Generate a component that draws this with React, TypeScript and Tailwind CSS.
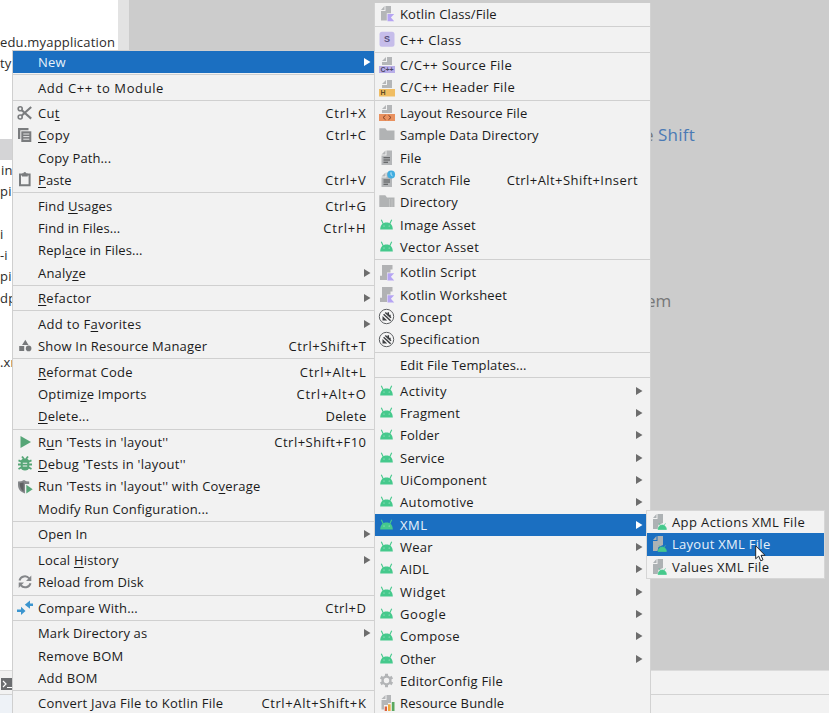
import React from "react";

type Item = { label: string; icon?: string; keys?: string; arrow?: boolean; active?: boolean; track?: string; keyTrack?: string };
type Entry = Item | "-";

const contextMenu: Entry[] = [
  { label: "New", arrow: true, active: true, track: "tracking-[0.25px]" },
  "-",
  { label: "Add C++ to Module", track: "tracking-[0.6px]" },
  "-",
  { label: "Cu&t", icon: "cut", keys: "Ctrl+X", track: "tracking-[0.3px]", keyTrack: "tracking-[0.8px]" },
  { label: "&Copy", icon: "copy", keys: "Ctrl+C", track: "tracking-[0.35px]" },
  { label: "Copy Path...", track: "tracking-[0.12px]" },
  { label: "&Paste", icon: "paste", keys: "Ctrl+V", track: "tracking-[0.1px]", keyTrack: "tracking-[0.8px]" },
  "-",
  { label: "Find &Usages", keys: "Ctrl+G", track: "tracking-[0.15px]", keyTrack: "tracking-[0.5px]" },
  { label: "Find in Files...", keys: "Ctrl+H", track: "tracking-[0.08px]", keyTrack: "tracking-[0.8px]" },
  { label: "Repl&ace in Files...", track: "tracking-[0.12px]" },
  { label: "Analy&ze", arrow: true, track: "tracking-[0.2px]" },
  "-",
  { label: "&Refactor", arrow: true, track: "tracking-[0.3px]" },
  "-",
  { label: "Add to F&avorites", arrow: true, track: "tracking-[0.32px]" },
  { label: "Show In Resource Manager", icon: "resource", keys: "Ctrl+Shift+T", track: "tracking-[0.19px]" },
  "-",
  { label: "&Reformat Code", keys: "Ctrl+Alt+L", track: "tracking-[0.27px]", keyTrack: "tracking-[0.75px]" },
  { label: "Optimi&ze Imports", keys: "Ctrl+Alt+O", track: "tracking-[0.18px]", keyTrack: "tracking-[0.75px]" },
  { label: "&Delete...", keys: "Delete", track: "tracking-[0.2px]", keyTrack: "tracking-[0.3px]" },
  "-",
  { label: "R&un 'Tests in 'layout''", icon: "run", keys: "Ctrl+Shift+F10", track: "tracking-[0.2px]", keyTrack: "tracking-[0.5px]" },
  { label: "&Debug 'Tests in 'layout''", icon: "debug", track: "tracking-[0.26px]" },
  { label: "Run 'Tests in 'layout'' with Co&verage", icon: "coverage", track: "tracking-[0.2px]" },
  { label: "Modify Run Configuration...", track: "tracking-[0.19px]" },
  "-",
  { label: "Open In", arrow: true, track: "tracking-[0.15px]" },
  "-",
  { label: "Local &History", arrow: true, track: "tracking-[0.2px]" },
  { label: "Reload from Disk", icon: "reload", track: "tracking-[0.13px]" },
  "-",
  { label: "Compare With...", icon: "compare", keys: "Ctrl+D", track: "tracking-[0.17px]", keyTrack: "tracking-[0.5px]" },
  "-",
  { label: "Mark Directory as", arrow: true, track: "tracking-[0.13px]" },
  { label: "Remove BOM", track: "tracking-[0.3px]" },
  { label: "Add BOM", track: "tracking-[0.3px]" },
  "-",
  { label: "Convert Java File to Kotlin File", keys: "Ctrl+Alt+Shift+K", track: "tracking-[0.24px]", keyTrack: "tracking-[0.62px]" },
];

const newMenu: Entry[] = [
  { label: "Kotlin Class/File", icon: "kotlinFile", track: "tracking-[0.12px]" },
  "-",
  { label: "C++ Class", icon: "cppClass", track: "tracking-[0.45px]" },
  "-",
  { label: "C/C++ Source File", icon: "cppSource", track: "tracking-[0.42px]" },
  { label: "C/C++ Header File", icon: "cppHeader", track: "tracking-[0.42px]" },
  "-",
  { label: "Layout Resource File", icon: "layoutFile", track: "tracking-[0.15px]" },
  { label: "Sample Data Directory", icon: "folder", track: "tracking-[0.13px]" },
  { label: "File", icon: "file", track: "tracking-[0.25px]" },
  { label: "Scratch File", icon: "scratch", keys: "Ctrl+Alt+Shift+Insert", track: "tracking-[0.14px]", keyTrack: "tracking-[0.43px]" },
  { label: "Directory", icon: "directory", track: "tracking-[0.25px]" },
  { label: "Image Asset", icon: "android", track: "tracking-[0.25px]" },
  { label: "Vector Asset", icon: "android", track: "tracking-[0.35px]" },
  "-",
  { label: "Kotlin Script", icon: "kotlinScript", track: "tracking-[0.27px]" },
  { label: "Kotlin Worksheet", icon: "kotlinScript", track: "tracking-[0.22px]" },
  { label: "Concept", icon: "gauge", track: "tracking-[0.35px]" },
  { label: "Specification", icon: "gauge", track: "tracking-[0.25px]" },
  "-",
  { label: "Edit File Templates...", track: "tracking-[0.13px]" },
  "-",
  { label: "Activity", icon: "android", arrow: true, track: "tracking-[0.45px]" },
  { label: "Fragment", icon: "android", arrow: true, track: "tracking-[0.22px]" },
  { label: "Folder", icon: "android", arrow: true, track: "tracking-[0.2px]" },
  { label: "Service", icon: "android", arrow: true, track: "tracking-[0.25px]" },
  { label: "UiComponent", icon: "android", arrow: true, track: "tracking-[0.22px]" },
  { label: "Automotive", icon: "android", arrow: true, track: "tracking-[0.38px]" },
  { label: "XML", icon: "android", arrow: true, active: true, track: "tracking-[0.5px]" },
  { label: "Wear", icon: "android", arrow: true, track: "tracking-[0.2px]" },
  { label: "AIDL", icon: "android", arrow: true, track: "tracking-[0.25px]" },
  { label: "Widget", icon: "android", arrow: true, track: "tracking-[0.65px]" },
  { label: "Google", icon: "android", arrow: true, track: "tracking-[0.6px]" },
  { label: "Compose", icon: "android", arrow: true, track: "tracking-[0.38px]" },
  { label: "Other", icon: "android", arrow: true, track: "tracking-[0.15px]" },
  { label: "EditorConfig File", icon: "gear", track: "tracking-[0.24px]" },
  { label: "Resource Bundle", icon: "bundle", track: "tracking-[0.12px]" },
];

const xmlMenu: Entry[] = [
  { label: "App Actions XML File", icon: "xmlFile", track: "tracking-[0.4px]" },
  { label: "Layout XML File", icon: "xmlFile", active: true, track: "tracking-[0.28px]" },
  { label: "Values XML File", icon: "xmlFile", track: "tracking-[0.28px]" },
];

const Page = () => (
  <>
    <path d="M6.500 .500 2.500 4.500h4z" fill="#b4b6b8" />
    <path d="M7.500 .500v5h-5v9.500h10.500V.500z" fill="#b4b6b8" />
  </>
);

const HalfPage = () => (
  <>
    <path d="M7 0 3 4h4z" fill="#b4b6b8" />
    <path d="M8 0v5H3v3h10V0z" fill="#b4b6b8" />
  </>
);

const badgeText = "font-['Liberation_Sans'] font-bold";

const icons: Record<string, React.ReactNode> = {
  cut: (
    <g fill="none" stroke="#7a7c7e" strokeWidth="1.600">
      <circle cx="3.200" cy="3.800" r="2" />
      <circle cx="3.200" cy="12" r="2" />
      <path d="M4.800 5.200 14.200 13.600M4.800 10.600 14.200 2" strokeWidth="2.100" />
    </g>
  ),
  copy: (
    <>
      <path d="M1 0h10.500v2.300H3.300v8.700H1z" fill="#7a7c7e" />
      <path d="M4.300 3.300h10V14h-10z" fill="#7a7c7e" />
      <path d="M6.300 6h6M6.300 8.600h6M6.300 11.200h6" stroke="#f2f2f2" strokeWidth=".9" />
    </>
  ),
  paste: (
    <>
      <path d="M3 2.500h9.600v10.800H3z" fill="none" stroke="#7a7c7e" strokeWidth="2" />
      <path d="M5 1.500h1.300a1.500 1.500 0 0 1 3 0h1.400v3H5z" fill="#7a7c7e" />
    </>
  ),
  resource: (
    <g fill="#76787a">
      <path d="M8.300 1.800 11.500 7H5.100z" />
      <path d="M2.200 8h5v5h-5z" />
      <circle cx="11.600" cy="10.400" r="2.800" />
    </g>
  ),
  run: <path d="M3.500 2v12L14 8z" fill="#56a677" />,
  debug: (
    <g>
      <path d="M3.800 5.500C3.800 3.500 5.700 2.500 8 2.500s4.200 1 4.200 3v5.700c0 2-1.800 3.300-4.200 3.300s-4.200-1.300-4.200-3.300z" fill="#56a677" />
      <path d="M5 .500l2 2.500M11 .500 9 3M1.500 4.400 5 5.800M14.500 4.400 11 5.800M1 8.500h14M1.500 13 5 11M14.500 13 11 11" stroke="#56a677" strokeWidth="1.900" />
      <path d="M5.800 7.200h4.400M5.800 10h4.400" stroke="#f2f2f2" strokeWidth="1.100" />
    </g>
  ),
  coverage: (
    <>
      <path d="M1 2.600Q4.500 2.600 7 1q2 1.600 5.200 1.600V5H8v9.500C3.400 13 1 10 1 6z" fill="#85878a" />
      <path d="M6.600 3.500v9Q3 10.500 2.600 4.300z" fill="#5f6163" />
      <path d="M9.300 5.800v8.800l6.400-4.400z" fill="#56a677" />
    </>
  ),
  reload: (
    <g fill="none" stroke="#85878a" strokeWidth="2">
      <path d="M2.500 6.500A5.600 5.600 0 0 1 12.300 4.500M13.500 9.200A5.600 5.600 0 0 1 3.700 11.200" />
      <path d="M14.300 1.500v5.500H9zM1.700 14V8.600H7z" fill="#85878a" stroke="none" />
    </g>
  ),
  compare: (
    <g fill="#3b95cf">
      <path d="M0 9.500h4V6.800L8.500 11 4 15v-3H0z" />
      <path d="M16 3.500h-3V.500L7.800 4.700l5.200 4V6H16z" />
    </g>
  ),
  kotlinFile: (
    <>
      <path d="M5.500 0 2 4h3.500z" fill="#b4b6b8" />
      <path d="M6.500 0v5H2v9.500h5.800V7.300H12V0z" fill="#b4b6b8" />
      <path d="M8.500 8h6.700l-3.300 3.500 3.300 3.700H8.500z" fill="#b5a4f3" />
    </>
  ),
  kotlinScript: (
    <>
      <path d="M3 0h10.500v4.500h-2V7.500H8V15H1v-4.300h2z" fill="#b1b2b4" />
      <path d="M8.500 8.200h6.700l-3.300 3.500 3.300 3.700H8.500z" fill="#b5a4f3" />
    </>
  ),
  cppClass: (
    <>
      <rect x=".500" y="-.300" width="15" height="15" rx="2.500" fill="#c6bdea" />
      <text x="8" y="10.300" textAnchor="middle" fontSize="9" fill="#55507a" className={badgeText}>S</text>
    </>
  ),
  cppSource: (
    <>
      <HalfPage />
      <path d="M0 9h16v7H0z" fill="#b9aee8" />
      <text x="8" y="15" textAnchor="middle" fontSize="7" textLength="13" fill="#4d4966" className={badgeText}>C++</text>
    </>
  ),
  cppHeader: (
    <>
      <HalfPage />
      <path d="M0 9h16v7.500H0z" fill="#f0bd62" />
      <text x="4" y="15.300" textAnchor="middle" fontSize="7" fill="#5d4c26" className={badgeText}>H</text>
    </>
  ),
  layoutFile: (
    <>
      <HalfPage />
      <path d="M0 9h16v7H0z" fill="#e9915f" />
      <path d="M6.500 10.300 4 12.500l2.500 2.200M9.500 10.300l2.500 2.200-2.500 2.200" fill="none" stroke="#7e4228" />
    </>
  ),
  folder: <path d="M.300 1.300h6L8 3.500h7.500V13H.300z" fill="#b1b3b4" />,
  directory: (
    <>
      <path d="M.300 1.300h6L8 3.500h7.500V13H.300z" fill="#b1b3b4" />
      <path d="M10.500 5v8M13 5v8" stroke="#c5c6c7" strokeWidth=".8" />
    </>
  ),
  file: (
    <>
      <Page />
      <path d="M4.500 7.800h6.500M4.500 10h6.500M4.500 12.200h4.500" stroke="#4e5052" strokeWidth="1.100" />
    </>
  ),
  scratch: (
    <>
      <Page />
      <path d="M4.500 8h6.500M4.500 10h6.500M4.500 12.200h4.500" stroke="#4e5052" strokeWidth="1.100" />
      <circle cx="12.200" cy="2.500" r="3.900" fill="#41ade0" />
      <path d="M12 .3V2.700l1.500 1.200" fill="none" stroke="#d5effa" strokeWidth=".9" />
    </>
  ),
  android: (
    <>
      <path d="M1.200 12.500C1.300 7.800 3.700 5.400 7.500 5.400s6.200 2.400 6.300 7.100z" fill="#45c98c" />
      <path d="M2.300 2.800 4.300 7M12.700 2.800 10.700 7" stroke="#45c98c" strokeWidth="1.100" />
      <circle cx="5" cy="9" r=".550" fill="#c4eeda" />
      <circle cx="10.200" cy="9" r=".550" fill="#c4eeda" />
    </>
  ),
  gauge: (
    <>
      <circle cx="7.500" cy="7.500" r="7.200" fill="#f6f6f6" stroke="#5c5e61" strokeWidth="1" />
      <path d="M3.500 11.500V7l4.700 4.500z" fill="#3d3f42" />
      <path d="M4.600 5.300l7 6.400M6.300 3.500l5.700 5.200M9.300 3.300v3.200h2.400" fill="none" stroke="#3d3f42" strokeWidth="1.500" />
    </>
  ),
  gear: (
    <g fill="none" stroke="#b3b5b7">
      <circle cx="7.500" cy="7.500" r="3.900" strokeWidth="2.400" />
      <path d="M7.500 .700v3M7.500 11.300v3M1.700 4.100l2.600 1.600M10.700 9.300l2.600 1.600M1.700 10.900l2.600-1.600M10.700 5.700l2.600-1.600" strokeWidth="3" />
    </g>
  ),
  bundle: (
    <>
      <path d="M6.500 0 2.500 4h4zM7.500 0v5h-5v9.500H5V10h4V8h3V0z" fill="#b4b6b8" />
      <path d="M5.700 11.500H8V16H5.700z" fill="#d9603f" />
      <path d="M9 9.300h2.600V16H9z" fill="#f0a73e" />
      <path d="M12.800 7h2.700v9h-2.700z" fill="#5aa85f" />
    </>
  ),
  xmlFile: (
    <>
      <path d="M5.500 0 2 4h3.500zM6.500 0v5H2v10h4.500l1-4 4.500-2V0z" fill="#adb2b4" />
      <path d="M7 15.500a4.200 4.500 0 0 1 8.400 0zM8 9.300l1.500 2.300M14.500 9.300 13 11.600" fill="#45c98c" stroke="#45c98c" strokeWidth=".7" />
    </>
  ),
};

function Label({ text }: { text: string }) {
  const at = text.indexOf("&");
  if (at < 0) return <>{text}</>;
  return (
    <>
      {text.slice(0, at)}
      <span className="underline decoration-1 underline-offset-2">{text[at + 1]}</span>
      {text.slice(at + 2)}
    </>
  );
}

function Menu({ entries, className, keysEnd, arrowEnd }: { entries: Entry[]; className: string; keysEnd: string; arrowEnd: string }) {
  return (
    <div className={`absolute flex flex-col bg-[#f2f2f2] text-[#1b1b1b] ${className}`}>
      {entries.map((entry, i) =>
        entry === "-" ? (
          <div key={i} className="h-[3.22px] shrink-0 pt-px">
            <div className="h-px bg-[#d0d0d0]" />
          </div>
        ) : (
          <div key={i} className={`flex h-[22.33px] shrink-0 items-center pl-1 ${entry.active ? "bg-[#1b6fc1] text-[#e8f1fa]" : ""}`}>
            <svg viewBox="0 0 16 16" className="mr-[5px] size-4 shrink-0 overflow-visible">
              {entry.icon && icons[entry.icon]}
            </svg>
            <span className={`flex-1 pt-[1.2px] whitespace-pre ${entry.track ?? ""}`}>
              <Label text={entry.label} />
            </span>
            {entry.keys && <span className={`pt-[1.2px] whitespace-pre ${keysEnd} ${entry.keyTrack ?? "tracking-[0.6px]"}`}>{entry.keys}</span>}
            {entry.arrow && (
              <svg viewBox="0 0 7 8" className={`h-2 w-[7px] ${arrowEnd}`}>
                <path d="M0 0v8l6.500-4z" fill={entry.active ? "#ffffff" : "#6d6d6d"} />
              </svg>
            )}
          </div>
        ),
      )}
    </div>
  );
}

const treeRows = ["", "edu.myapplication", "ty", "", "", "", "", "in", "pi", "", "i", "-i", "pi", "dp", "", "", ".xr"];

export default function App() {
  return (
    <div className="relative flex h-[713px] w-[829px] flex-col overflow-hidden bg-white font-['Open_Sans','Noto_Sans',sans-serif] text-[13px]">
      <div className="flex h-[670px] shrink-0">
        <div className="w-[118px] overflow-hidden pt-[11px] tracking-[0.18px]">
          {treeRows.map((row, i) => (
            <div key={i} className={`flex h-[21.3px] items-center whitespace-pre text-[#2b2b2b] ${i === 6 ? "bg-[#d4d4d6]" : ""} ${row === "in" ? "pl-px" : ""}`}>
              {row}
            </div>
          ))}
        </div>
        <div className="w-[11px] bg-[#e3e3e3]" />
        <div className="flex-1 bg-[#cccccc] pt-[122px] pl-[515px] text-[17px] text-[#777777]">
          <div className="h-[166px] leading-[26px] whitespace-pre">
            e <span className="tracking-[0.25px] text-[#4a7ab5]">Shift</span>
          </div>
          <div className="pl-[2px] leading-[26px]">em</div>
        </div>
      </div>
      <div className="flex h-6 shrink-0 items-center border-t border-[#dcdcdc] bg-[#f2f2f2] pl-px">
        <svg viewBox="0 0 12 12" className="mt-[2px] size-3">
          <path d="M0 0h12v12H0z" fill="#6b6d70" />
          <path d="m2 3 3 3-3 3M6 9.500h5" fill="none" stroke="#fff" strokeWidth="1.200" />
        </svg>
      </div>
      <div className="flex flex-1 border-t border-[#d3d3d3] bg-[#f2f2f2]">
        <div className="w-3 bg-[#eef2f7]" />
      </div>

      <Menu entries={contextMenu} className="top-[50px] left-3 h-[663px] w-[362px] border-t border-l border-[#cfcfcf]" keysEnd="mr-[7.500px]" arrowEnd="mr-[3px]" />
      <Menu entries={newMenu} className="top-[3px] left-[374px] h-[710px] w-[277px] border-r border-l border-[#d2d2d2]" keysEnd="mr-[12px]" arrowEnd="mr-[7px]" />
      <Menu entries={xmlMenu} className="top-[510px] left-[646px] h-[69px] w-[179px] border border-[#d6d6d6]" keysEnd="" arrowEnd="" />

      <svg viewBox="0 0 12 18" className="absolute top-[545px] left-[755px] h-[18px] w-3">
        <path d="M.700.800v13l3-2.700 2 4.700 2.300-1-2-4.500h4z" fill="#fff" stroke="#20252b" strokeWidth="1" />
      </svg>
    </div>
  );
}
